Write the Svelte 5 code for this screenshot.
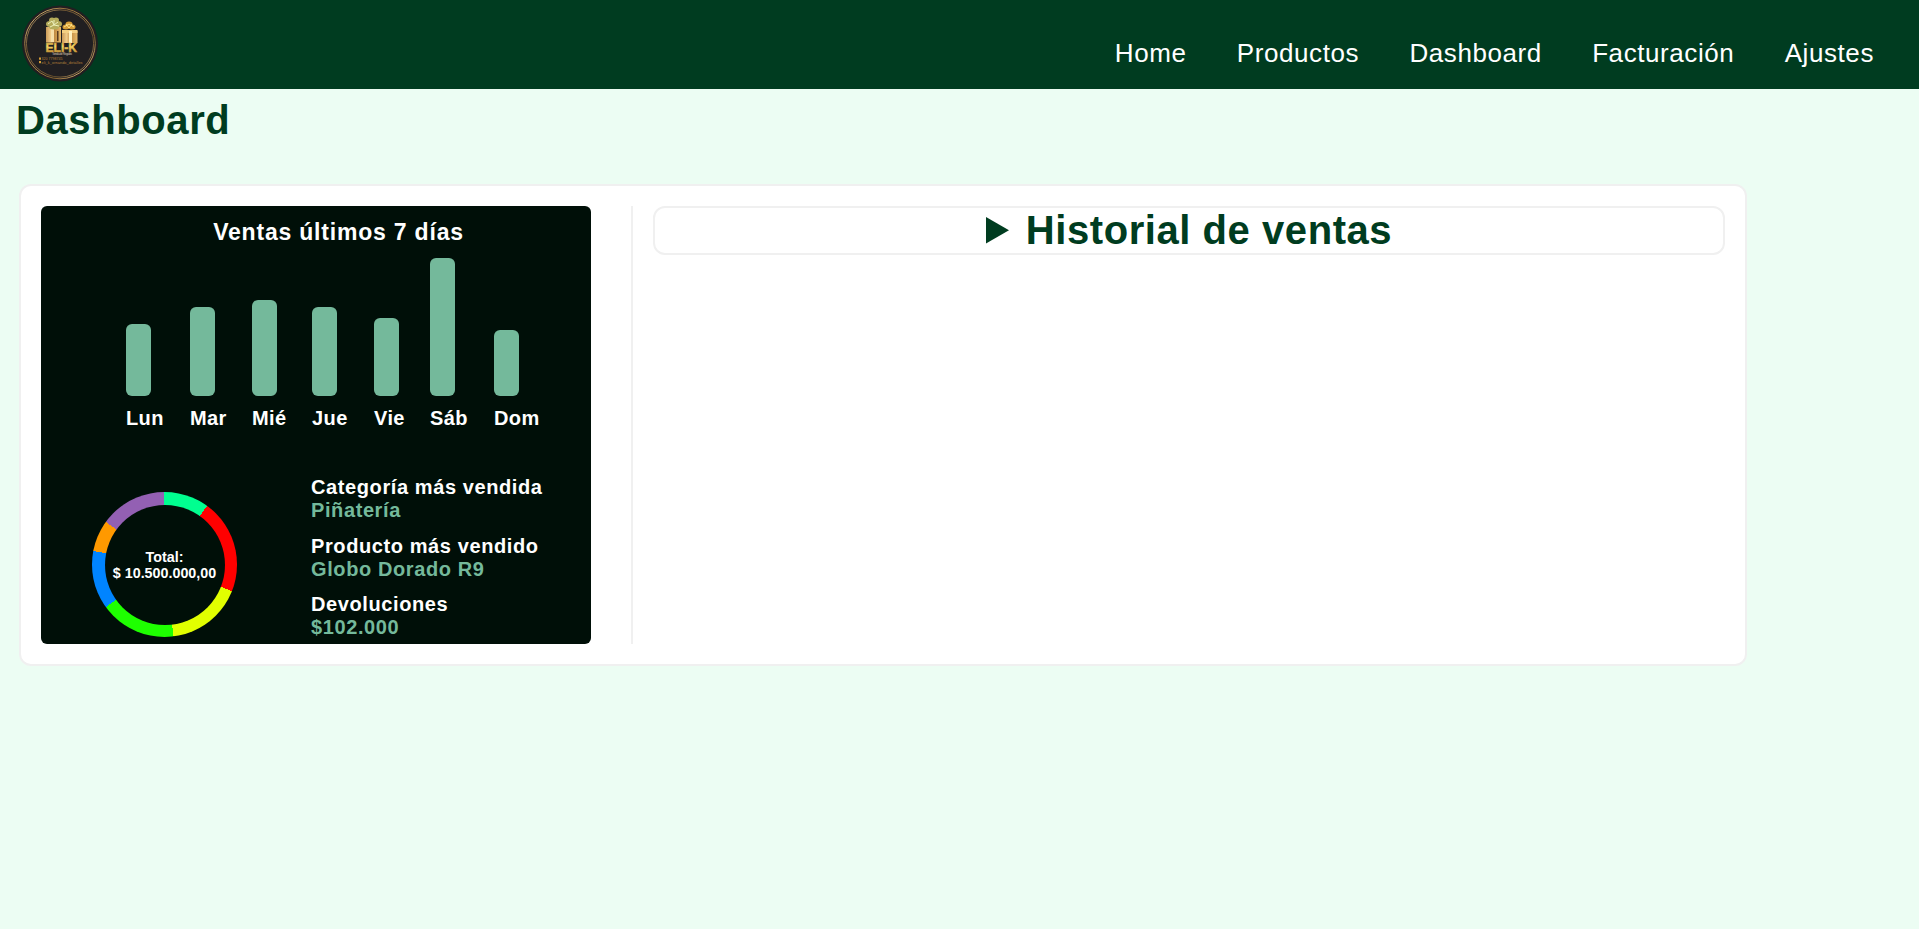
<script>
  const links = ['Home', 'Productos', 'Dashboard', 'Facturación', 'Ajustes'];
  const days = [
    { name: 'Lun', height: 72, width: 64 },
    { name: 'Mar', height: 89, width: 62 },
    { name: 'Mié', height: 96, width: 60 },
    { name: 'Jue', height: 89, width: 62 },
    { name: 'Vie', height: 78, width: 56 },
    { name: 'Sáb', height: 138, width: 64 },
    { name: 'Dom', height: 66, width: 60 }
  ];
  const facts = [
    { label: 'Categoría más vendida', value: 'Piñatería' },
    { label: 'Producto más vendido', value: 'Globo Dorado R9' },
    { label: 'Devoluciones', value: '$102.000' }
  ];
</script>

<header>
  <svg class="logo" viewBox="0 0 80 80" aria-label="ELI-K">
    <defs>
      <linearGradient id="gold" x1="0" y1="0" x2="1" y2="1">
        <stop offset="0" stop-color="#6b4c26" />
        <stop offset=".15" stop-color="#c9a468" />
        <stop offset=".3" stop-color="#8f6b38" />
        <stop offset=".5" stop-color="#b58a4c" />
        <stop offset=".7" stop-color="#80602f" />
        <stop offset=".85" stop-color="#c7a066" />
        <stop offset="1" stop-color="#6b4c26" />
      </linearGradient>
      <linearGradient id="box" x1="0" y1="0" x2="1" y2="0">
        <stop offset="0" stop-color="#c99a58" />
        <stop offset=".3" stop-color="#f0ca87" />
        <stop offset=".55" stop-color="#c08a42" />
        <stop offset="1" stop-color="#e5b869" />
      </linearGradient>
      <linearGradient id="letters" x1="0" y1="0" x2="0" y2="1">
        <stop offset="0" stop-color="#b07a20" />
        <stop offset=".45" stop-color="#f8d765" />
        <stop offset="1" stop-color="#b27a22" />
      </linearGradient>
    </defs>
    <circle cx="40" cy="39.5" r="38" fill="#211f21" />
    <circle cx="40" cy="39.5" r="35.3" fill="none" stroke="url(#gold)" stroke-width="1" />
    <circle cx="40" cy="39.5" r="33.6" fill="none" stroke="url(#gold)" stroke-width=".7" />
    <rect x="26" y="23" width="15" height="15.500" fill="url(#box)" />
    <rect x="31" y="24" width="3" height="14" fill="#f7dfa8" />
    <rect x="37" y="27" width="1.500" height="10" fill="#5a3c20" />
    <rect x="42" y="27" width="15.500" height="12" fill="url(#box)" />
    <rect x="42" y="26" width="15.500" height="3" fill="#f3cf82" />
    <rect x="49" y="27" width="3" height="12" fill="#fff0be" />
    <g fill="#b5ac5b">
      <ellipse cx="30" cy="20" rx="4" ry="3" />
      <ellipse cx="38" cy="20" rx="4" ry="3" />
      <ellipse cx="32" cy="16.500" rx="3" ry="3" />
      <ellipse cx="36" cy="16" rx="3" ry="2.500" />
      <ellipse cx="34" cy="23" rx="5" ry="2.500" />
    </g>
    <path d="M28 20l4-3 2 4 4-3M30 23l4-2 5 1M34 16v5" fill="none" stroke="#edf0ba" stroke-width="1" />
    <g fill="#d49b35">
      <ellipse cx="46" cy="23" rx="3.500" ry="2.500" />
      <ellipse cx="52" cy="23" rx="3.500" ry="2.500" />
      <ellipse cx="49" cy="20" rx="3.500" ry="2.500" />
    </g>
    <path d="M44 23l5-3 5 3M46 20l3 4 3-4" fill="none" stroke="#ffe184" stroke-width="1" />
    <text x="25.500" y="47.500" font-size="13" font-weight="bold" fill="url(#letters)" stroke="url(#letters)" stroke-width=".5" textLength="31.500" lengthAdjust="spacingAndGlyphs">ELI-K</text>
    <text x="32" y="51.300" font-size="3.500" fill="#c2b7a5" textLength="20">Tienda de Regalos</text>
    <rect x="19" y="53.500" width="2" height="2.200" fill="#d49b35" />
    <text x="21.500" y="56" font-size="3.600" fill="#b5803a" textLength="21">320 7798745</text>
    <rect x="19" y="57" width="2" height="2.200" fill="#d49b35" />
    <text x="21.500" y="59.700" font-size="3.800" fill="#b5803a" textLength="41">eli_k_ornando_detalles</text>
  </svg>
  <nav>
    {#each links as link}<a href="#{link}">{link}</a>{/each}
  </nav>
</header>

<h1>Dashboard</h1>

<main>
  <section class="summary">
    <h2>Ventas últimos 7 días</h2>
    <div class="chart">
      {#each days as day}
        <div class="day" style="width: {day.width}px">
          <div class="bar" style="height: {day.height}px"></div>
          <span>{day.name}</span>
        </div>
      {/each}
    </div>
    <div class="bottom">
      <div class="donut">
        <div class="total">Total:<br />$ 10.500.000,00</div>
      </div>
      <dl>
        {#each facts as fact}
          <div>
            <dt>{fact.label}</dt>
            <dd>{fact.value}</dd>
          </div>
        {/each}
      </dl>
    </div>
  </section>
  <section class="history">
    <button>
      <svg width="23" height="27" viewBox="0 0 23 27"><path d="M0 0L23 13.300L0 26.600Z" fill="#003c20" /></svg>
      <span>Historial de ventas</span>
    </button>
  </section>
</main>

<style>
  :global(body) {
    margin: 0;
    background: #ecfdf3;
    font-family: 'Liberation Sans', Arial, sans-serif;
  }
  header {
    height: 89px;
    box-sizing: border-box;
    padding: 4px 45px 0 20px;
    background: #003c20;
    display: flex;
    justify-content: space-between;
    align-items: flex-start;
  }
  .logo {
    width: 80px;
    height: 80px;
  }
  nav {
    display: flex;
    gap: 50.300px;
    padding-top: 34px;
  }
  nav a {
    color: #fff;
    text-decoration: none;
    font-size: 26px;
    line-height: 30px;
    letter-spacing: 0.580px;
  }
  h1 {
    margin: 8px 0 0 16px;
    font-size: 40px;
    line-height: 46px;
    letter-spacing: 0.600px;
    color: #003c20;
  }
  main {
    box-sizing: border-box;
    width: 1728px;
    height: 482px;
    margin: 41px 0 0 19px;
    padding: 20px;
    border: 2px solid #f0f0f0;
    border-radius: 12px;
    background: #fff;
    display: flex;
  }
  .summary {
    width: 550px;
    box-sizing: border-box;
    border-radius: 6px;
    background: #000f08;
    color: #fff;
    font-weight: bold;
    overflow: hidden;
  }
  h2 {
    margin: 12px 0 0 45px;
    text-align: center;
    font-size: 23px;
    line-height: 28px;
    letter-spacing: 0.800px;
  }
  .chart {
    height: 180px;
    margin: 6px 0 0 85px;
    display: flex;
    align-items: flex-end;
  }
  .bar {
    width: 25px;
    margin-bottom: 11px;
    border-radius: 6px;
    background: #74b99b;
  }
  .day span {
    display: block;
    font-size: 20px;
    line-height: 23px;
    letter-spacing: 0.400px;
    padding-bottom: 2px;
  }
  .day {
    flex: none;
  }
  .bottom {
    display: flex;
    padding: 44px 0 0 50px;
  }
  .donut {
    width: 145px;
    height: 145px;
    margin: 16px 0 0 1px;
    border-radius: 50%;
    display: flex;
    align-items: center;
    justify-content: center;
    background: conic-gradient(#00ff90 0 10%, #f00 0 31%, #e1ff00 0 48%, #1eff00 0 65%, #0084ff 0 78%, #f90 0 85%, #9360b3 0);
  }
  .total {
    width: 120px;
    height: 120px;
    box-sizing: border-box;
    padding-top: 44px;
    border-radius: 50%;
    background: #000f08;
    text-align: center;
    white-space: nowrap;
    font-size: 14.300px;
    line-height: 16px;
  }
  dl {
    margin: 0 0 0 74px;
    font-size: 20px;
    line-height: 23px;
    letter-spacing: 0.600px;
  }
  dl div {
    margin-bottom: 12.500px;
  }
  dd {
    margin: 0;
    color: #74b99b;
  }
  .history {
    flex: 1;
    margin-left: 40px;
    padding-left: 20px;
    border-left: 2px solid #f0f0f0;
  }
  button {
    width: 100%;
    height: 49px;
    padding: 0;
    border: 2px solid #f0f0f0;
    border-radius: 12px;
    background: #fff;
    color: #003c20;
    font: bold 40px/45px 'Liberation Sans', Arial, sans-serif;
    letter-spacing: 0.560px;
    display: flex;
    justify-content: center;
    align-items: center;
    gap: 17px;
  }
</style>
